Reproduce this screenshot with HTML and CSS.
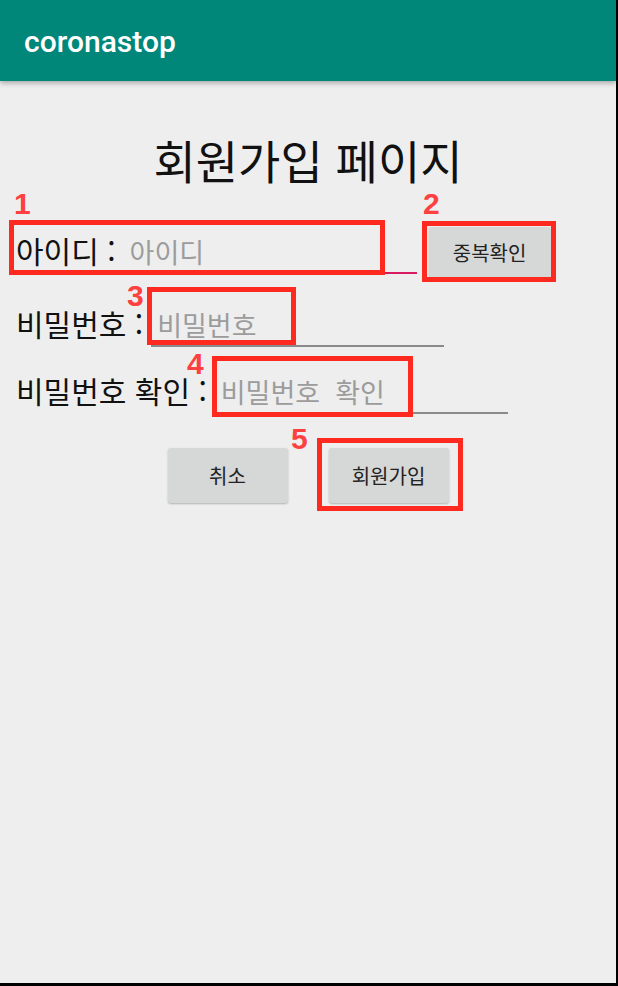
FILE: index.html
```html
<!DOCTYPE html>
<html lang="ko">

<head>
    <meta charset="UTF-8">
    <meta name="viewport" content="width=device-width, initial-scale=1.0">
    <title>coronastop - 회원가입</title>
    <link rel="stylesheet" href="styles.css">
</head>

<body>
    <div class="screen">
        <header class="toolbar">
            <h1>coronastop</h1>
        </header>

        <main class="content">
            <h2 class="page-title">회원가입 페이지</h2>

            <div class="form-row row-id">
                <label for="userId">아이디 :</label>
                <input type="text" id="userId" class="focused" placeholder="아이디">
                <button type="button" class="btn btn-check">중복확인</button>
            </div>

            <div class="form-row row-pw">
                <label for="userPw">비밀번호 :</label>
                <input type="password" id="userPw" placeholder="비밀번호">
            </div>

            <div class="form-row row-pw2">
                <label for="userPw2">비밀번호 확인 :</label>
                <input type="password" id="userPw2" placeholder="비밀번호&nbsp; 확인">
            </div>

            <div class="actions">
                <button type="button" class="btn">취소</button>
                <button type="button" class="btn">회원가입</button>
            </div>
        </main>

        <!-- annotation marks drawn over the screenshot -->
        <div class="mark box1"></div>
        <div class="mark box2"></div>
        <div class="mark box3"></div>
        <div class="mark box4"></div>
        <div class="mark box5"></div>
        <span class="num num1">1</span>
        <span class="num num2">2</span>
        <span class="num num3">3</span>
        <span class="num num4">4</span>
        <span class="num num5">5</span>
    </div>
</body>

</html>
```

FILE: styles.css
```css
body {
    margin: 0;
    background-color: #000;
    font-family: "Noto Sans CJK KR", "Noto Sans", sans-serif;
}

.screen {
    position: relative;
    width: 616px;
    height: 983px;
    background-color: #eeeeee;
    overflow: hidden;
}

.toolbar {
    height: 81px;
    background-color: #00877a;
    box-shadow: 0 2px 5px rgba(0, 0, 0, 0.3);
    display: flex;
    align-items: center;
    padding-left: 24px;
}

.toolbar h1 {
    margin: 0;
    color: #fff;
    font-family: Roboto, "Noto Sans", sans-serif;
    font-weight: 500;
    font-size: 30px;
    line-height: 1;
    margin-top: 2px;
}

.content {
    display: flex;
    flex-direction: column;
    padding: 0 0 0 16px;
}

.page-title {
    margin: 48px 0 0 -16px;
    text-align: center;
    font-weight: 400;
    font-size: 46px;
    line-height: 60px;
    color: #111;
}

.form-row {
    display: flex;
    align-items: center;
    height: 50px;
}

.row-id {
    margin-top: 36px;
}

.row-pw {
    margin-top: 23px;
}

.row-pw2 {
    margin-top: 17px;
}

.form-row label {
    font-size: 30px;
    color: #111;
    white-space: nowrap;
    padding-right: 8px;
}

.form-row input {
    width: 293px;
    height: 48px;
    box-sizing: border-box;
    border: none;
    border-bottom: 2px solid #8a8a8a;
    background: transparent;
    padding: 4px 6px 0;
    font-family: "Noto Sans CJK KR", sans-serif;
    font-size: 27px;
    color: #111;
    outline: none;
}

.form-row input::placeholder {
    color: #9c9c9c;
    white-space: pre;
}

.form-row input.focused {
    border-bottom-color: #d81b60;
}

.btn {
    font-family: Roboto, "Noto Sans CJK KR", sans-serif;
    font-size: 20px;
    color: #222;
    background-color: #d6d7d7;
    border: none;
    border-radius: 3px;
    box-shadow: 0 1px 2px rgba(0, 0, 0, 0.25);
    cursor: pointer;
}

.btn-check {
    width: 122px;
    height: 51px;
    margin: 4px 0 0 12px;
}

.actions {
    display: flex;
    justify-content: center;
    gap: 41px;
    margin: 33px 0 0 -16px;
}

.actions .btn {
    width: 120px;
    height: 55px;
}

.mark {
    position: absolute;
    box-sizing: border-box;
    border: 5px solid #ff2a1f;
}

.box1 { left: 9px; top: 220px; width: 376px; height: 55px; }
.box2 { left: 422px; top: 221px; width: 134px; height: 61px; }
.box3 { left: 147px; top: 287px; width: 149px; height: 58px; }
.box4 { left: 212px; top: 356px; width: 201px; height: 61px; }
.box5 { left: 317px; top: 438px; width: 146px; height: 73px; }

.num {
    position: absolute;
    font-family: "Liberation Sans", Arial, sans-serif;
    font-weight: 700;
    font-size: 30px;
    line-height: 30px;
    color: #ff4040;
}

.num1 { left: 14px; top: 189px; }
.num2 { left: 423px; top: 189px; }
.num3 { left: 127px; top: 281px; }
.num4 { left: 187px; top: 349px; }
.num5 { left: 291px; top: 424px; }
```
